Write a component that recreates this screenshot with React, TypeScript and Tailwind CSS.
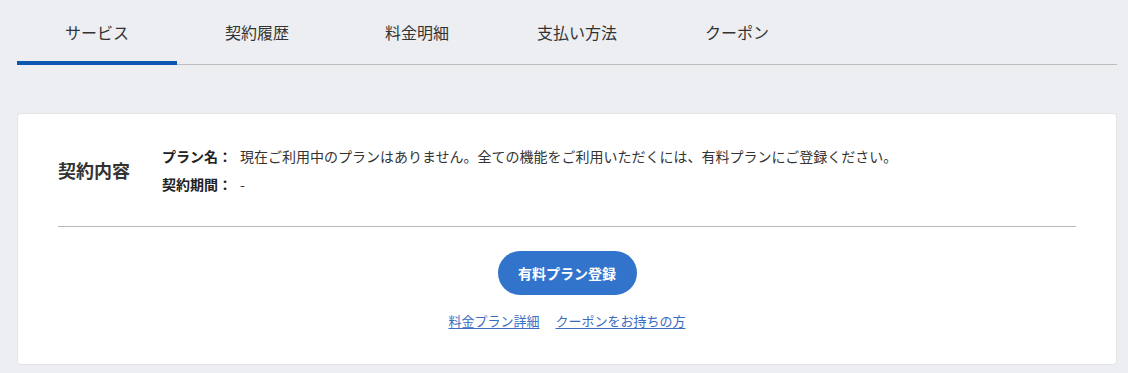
import React from 'react'

const tabs = ['サービス', '契約履歴', '料金明細', '支払い方法', 'クーポン']

export default function App() {
  return (
    <div
      className="min-h-[373px] bg-[#eceef1] pl-[17px] pr-[11px] pb-[10px] text-[#333]"
      style={{ fontFamily: '"Noto Sans CJK JP", "Noto Sans", sans-serif' }}
    >
      {/* tabs */}
      <div className="flex border-b border-[#bdbdbd]">
        {tabs.map((t, i) => (
          <div
            key={t}
            className={
              i === 0
                ? 'w-[160px] h-[65px] -mb-px pt-[22px] text-center text-[16px] leading-[20px] border-b-4 border-[#0a56b0]'
                : 'w-[160px] h-[65px] -mb-px pt-[22px] text-center text-[16px] leading-[20px] border-b-4 border-transparent'
            }
          >
            {t}
          </div>
        ))}
      </div>

      {/* contract card */}
      <div className="mt-[48px] bg-white border border-[#e3e4e6] rounded-[4px] px-10 pt-[28px] pb-[33px]">
        <div className="flex items-center">
          <div className="w-[104px] text-[18px] font-bold leading-[28px] text-[#333]">契約内容</div>
          <div className="text-[14px] leading-[28px]">
            <div className="flex">
              <span className="w-[78px] font-bold text-[#222]">プラン名：</span>
              <span>現在ご利用中のプランはありません。全ての機能をご利用いただくには、有料プランにご登録ください。</span>
            </div>
            <div className="flex">
              <span className="w-[78px] font-bold text-[#222]">契約期間：</span>
              <span>-</span>
            </div>
          </div>
        </div>

        <div className="mt-[28px] border-t border-[#b9b9b9]" />

        <div className="flex flex-col items-center">
          <button className="mt-[24px] h-[44px] w-[139px] rounded-full bg-[#3273cb] text-[14px] font-bold text-white">
            有料プラン登録
          </button>
          <div className="mt-[16px] flex gap-4 text-[13px] leading-[20px] text-[#3a6cc2]">
            <a href="#" className="underline underline-offset-2">料金プラン詳細</a>
            <a href="#" className="underline underline-offset-2">クーポンをお持ちの方</a>
          </div>
        </div>
      </div>
    </div>
  )
}
